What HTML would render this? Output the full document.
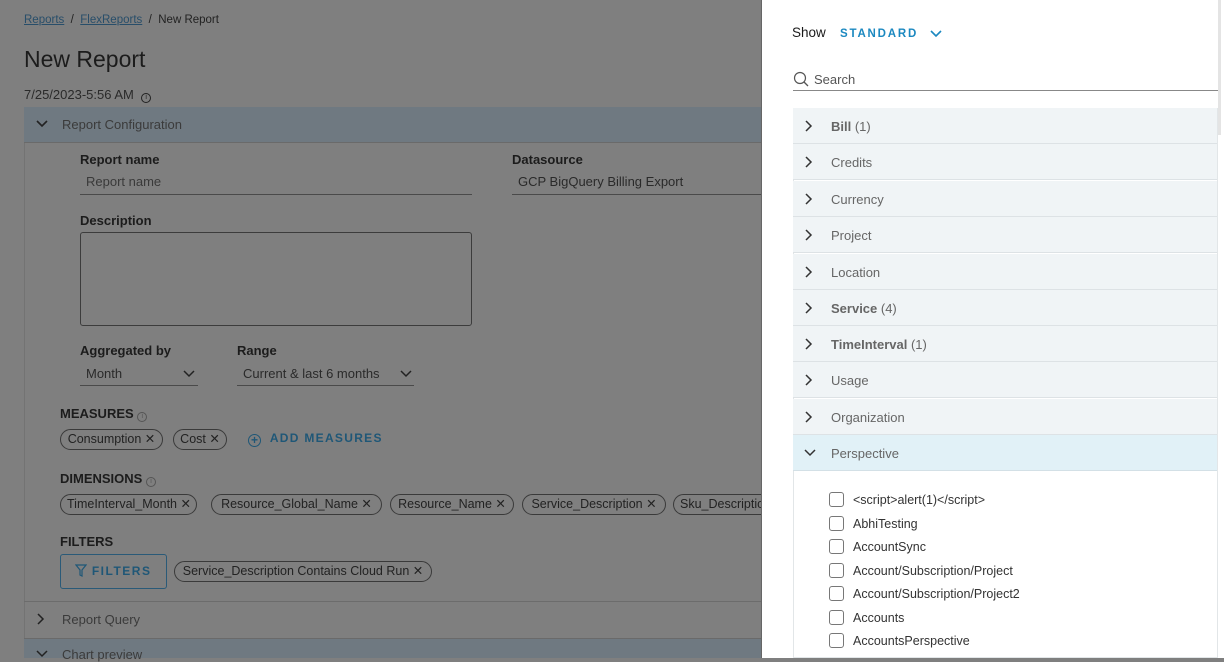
<!DOCTYPE html>
<html><head><meta charset="utf-8"><style>
*{box-sizing:border-box;margin:0;padding:0}
body{width:1224px;height:658px;overflow:hidden;background:#7f7f7f;font-family:"Liberation Sans",sans-serif;position:relative;color:#1e1e1e}
.a{position:absolute;white-space:nowrap}
.lbl{font-size:13px;font-weight:bold;color:#1c1c1c}
.in{border-bottom:1px solid #4a4a4a}
.chip{position:absolute;height:21px;border:1px solid #3a3a3a;border-radius:11px;font-size:12.5px;line-height:19px;padding:0 6px;color:#222;white-space:nowrap;text-align:center;overflow:hidden}
.row{position:absolute;left:793px;width:424px;height:36px;background:#f0f4f6;border-bottom:1px solid #dde2e5;font-size:13px;color:#666}
.row .t{position:absolute;left:38px;top:11px}
.row svg{position:absolute;left:12px;top:12px}
.cb{position:absolute;left:829px;width:15px;height:15px;border:1px solid #777;border-radius:3px;background:#fff}
.ct{position:absolute;left:853px;font-size:12.5px;color:#333;white-space:nowrap}
.ii{display:inline-block;width:10px;height:10px;border:1px solid #555;border-radius:50%;font-size:7px;line-height:8px;text-align:center;font-weight:normal;color:#555;vertical-align:0}
</style></head><body>
<div class="a" style="left:24px;top:14px;font-size:11.5px;color:#222"><span style="color:#284e6a;text-decoration:underline">Reports</span> &nbsp;/&nbsp; <span style="color:#284e6a;text-decoration:underline">FlexReports</span> &nbsp;/&nbsp; New Report</div>
<div class="a" style="left:24px;top:46px;font-size:23px;color:#1c1c1c">New Report</div>
<div class="a" style="left:24px;top:87px;font-size:13px;color:#2a2a2a">7/25/2023-5:56 AM &nbsp;<span class="ii" style="border-color:#222;color:#222;border-width:1.3px">i</span></div>
<div class="a" style="left:24px;top:107px;width:737px;height:551px;border-left:1px solid #737373"></div>
<div class="a" style="left:24px;top:107px;width:737px;height:36px;background:#6f7981;border-bottom:1px solid #6a6a6a"></div>
<svg class="a" style="left:36px;top:119px" width="12" height="10"><path d="M1 2l5 5 5-5" stroke="#222" stroke-width="1.6" fill="none"/></svg>
<div class="a" style="left:62px;top:117px;font-size:13px;color:#3b3b3b">Report Configuration</div>
<div class="a lbl" style="left:80px;top:152px">Report name</div>
<div class="a in" style="left:80px;top:174px;width:392px;height:21px;font-size:13px;color:#3a3a3a;padding-left:6px">Report name</div>
<div class="a lbl" style="left:512px;top:152px">Datasource</div>
<div class="a in" style="left:512px;top:174px;width:249px;height:21px;font-size:13px;color:#2a2a2a;padding-left:6px">GCP BigQuery Billing Export</div>
<div class="a lbl" style="left:80px;top:213px">Description</div>
<div class="a" style="left:80px;top:232px;width:392px;height:94px;border:1px solid #3c3c3c;border-radius:3px"></div>
<div class="a lbl" style="left:80px;top:343px">Aggregated by</div>
<div class="a in" style="left:80px;top:366px;width:118px;height:20px;font-size:13px;color:#2a2a2a;padding-left:6px">Month</div>
<svg class="a" style="left:183px;top:370px" width="12" height="8"><path d="M1 1l5 5 5-5" stroke="#222" stroke-width="1.5" fill="none"/></svg>
<div class="a lbl" style="left:237px;top:343px">Range</div>
<div class="a in" style="left:237px;top:366px;width:177px;height:20px;font-size:13px;color:#2a2a2a;padding-left:6px">Current &amp; last 6 months</div>
<svg class="a" style="left:400px;top:370px" width="12" height="8"><path d="M1 1l5 5 5-5" stroke="#222" stroke-width="1.5" fill="none"/></svg>
<div class="a lbl" style="left:60px;top:406px">MEASURES <span class="ii">i</span></div>
<div class="chip" style="left:60px;top:429px;width:103px">Consumption ✕</div>
<div class="chip" style="left:173px;top:429px;width:54px">Cost ✕</div>
<div class="a" style="left:248px;top:431px;font-size:12px;font-weight:bold;color:#1f5777;letter-spacing:1.3px"><span style="display:inline-block;width:13px;height:13px;border:1.2px solid #1f5777;border-radius:50%;text-align:center;line-height:10px;font-size:12px;vertical-align:-2px;letter-spacing:0">+</span>&nbsp; ADD MEASURES</div>
<div class="a lbl" style="left:60px;top:471px">DIMENSIONS <span class="ii">i</span></div>
<div class="chip" style="left:60px;top:494px;width:137px">TimeInterval_Month ✕</div>
<div class="chip" style="left:211px;top:494px;width:171px">Resource_Global_Name ✕</div>
<div class="chip" style="left:390px;top:494px;width:124px">Resource_Name ✕</div>
<div class="chip" style="left:522px;top:494px;width:144px">Service_Description ✕</div>
<div class="chip" style="left:673px;top:494px;width:88px;border-right:none;border-radius:11px 0 0 11px;text-align:left">Sku_Description</div>
<div class="a lbl" style="left:60px;top:534px">FILTERS</div>
<div class="a" style="left:60px;top:554px;width:107px;height:35px;border:1px solid #2a5a78;border-radius:3px;font-size:12px;font-weight:bold;color:#1f5777;letter-spacing:1.5px;padding:9px 0 0 14px"><svg width="12" height="13" style="vertical-align:-2px"><path d="M1 1h10l-4 5v6l-2-1v-5z" stroke="#1f5777" stroke-width="1.2" fill="none"/></svg> FILTERS</div>
<div class="chip" style="left:174px;top:561px;width:258px">Service_Description Contains Cloud Run ✕</div>
<div class="a" style="left:24px;top:601px;width:737px;height:1px;background:#6c6c6c"></div>
<svg class="a" style="left:37px;top:613px" width="8" height="12"><path d="M1 1l5 5-5 5" stroke="#222" stroke-width="1.5" fill="none"/></svg>
<div class="a" style="left:62px;top:612px;font-size:13px;color:#3b3b3b">Report Query</div>
<div class="a" style="left:24px;top:638px;width:737px;height:20px;background:#6f7981;border-top:1px solid #6a6a6a"></div>
<svg class="a" style="left:36px;top:650px" width="12" height="8"><path d="M1 1l5 5 5-5" stroke="#222" stroke-width="1.5" fill="none"/></svg>
<div class="a" style="left:62px;top:647px;font-size:13px;color:#3b3b3b">Chart preview</div>

<div class="a" style="left:761px;top:0;width:463px;height:658px;background:#fff;border-left:1px solid #666"></div>
<div class="a" style="left:1218px;top:0;width:3px;height:135px;background:#e4e4e4"></div>
<div class="a" style="left:792px;top:25px;font-size:13.5px;color:#1a1a1a">Show</div>
<div class="a" style="left:840px;top:28px;font-size:11.5px;font-weight:bold;color:#1b88c0;letter-spacing:1.8px">STANDARD</div>
<svg class="a" style="left:930px;top:30px" width="12" height="8"><path d="M1 1l5 5 5-5" stroke="#1b88c0" stroke-width="1.6" fill="none"/></svg>
<svg class="a" style="left:793px;top:71px" width="16" height="17"><circle cx="7" cy="7" r="5.5" stroke="#555" stroke-width="1.2" fill="none"/><path d="M11 11l4 4" stroke="#555" stroke-width="1.3"/></svg>
<div class="a" style="left:814px;top:72px;font-size:13px;color:#555">Search</div>
<div class="a" style="left:793px;top:90px;width:425px;height:1px;background:#888"></div>
<div class="a" style="left:793px;top:108px;width:425px;height:550px;border:1px solid #e2e6e8"></div>
<div class="row" style="top:108px"><svg width="8" height="12"><path d="M1 1l5 5-5 5" stroke="#333" stroke-width="1.5" fill="none"/></svg><span class="t"><b>Bill</b> (1)</span></div>
<div class="row" style="top:144px"><svg width="8" height="12"><path d="M1 1l5 5-5 5" stroke="#333" stroke-width="1.5" fill="none"/></svg><span class="t">Credits</span></div>
<div class="row" style="top:181px"><svg width="8" height="12"><path d="M1 1l5 5-5 5" stroke="#333" stroke-width="1.5" fill="none"/></svg><span class="t">Currency</span></div>
<div class="row" style="top:217px"><svg width="8" height="12"><path d="M1 1l5 5-5 5" stroke="#333" stroke-width="1.5" fill="none"/></svg><span class="t">Project</span></div>
<div class="row" style="top:254px"><svg width="8" height="12"><path d="M1 1l5 5-5 5" stroke="#333" stroke-width="1.5" fill="none"/></svg><span class="t">Location</span></div>
<div class="row" style="top:290px"><svg width="8" height="12"><path d="M1 1l5 5-5 5" stroke="#333" stroke-width="1.5" fill="none"/></svg><span class="t"><b>Service</b> (4)</span></div>
<div class="row" style="top:326px"><svg width="8" height="12"><path d="M1 1l5 5-5 5" stroke="#333" stroke-width="1.5" fill="none"/></svg><span class="t"><b>TimeInterval</b> (1)</span></div>
<div class="row" style="top:362px"><svg width="8" height="12"><path d="M1 1l5 5-5 5" stroke="#333" stroke-width="1.5" fill="none"/></svg><span class="t">Usage</span></div>
<div class="row" style="top:399px"><svg width="8" height="12"><path d="M1 1l5 5-5 5" stroke="#333" stroke-width="1.5" fill="none"/></svg><span class="t">Organization</span></div>
<div class="row" style="top:435px;background:#e1f1f7;border-bottom-color:#d3e0e6"><svg width="12" height="10" style="left:11px;top:14px"><path d="M1 1l5 5 5-5" stroke="#333" stroke-width="1.5" fill="none"/></svg><span class="t">Perspective</span></div>
<div class="cb" style="top:492px"></div><div class="ct" style="top:493px">&lt;script&gt;alert(1)&lt;/script&gt;</div>
<div class="cb" style="top:516px"></div><div class="ct" style="top:517px">AbhiTesting</div>
<div class="cb" style="top:539px"></div><div class="ct" style="top:540px">AccountSync</div>
<div class="cb" style="top:563px"></div><div class="ct" style="top:564px">Account/Subscription/Project</div>
<div class="cb" style="top:586px"></div><div class="ct" style="top:587px">Account/Subscription/Project2</div>
<div class="cb" style="top:610px"></div><div class="ct" style="top:611px">Accounts</div>
<div class="cb" style="top:633px"></div><div class="ct" style="top:634px">AccountsPerspective</div>
</body></html>
